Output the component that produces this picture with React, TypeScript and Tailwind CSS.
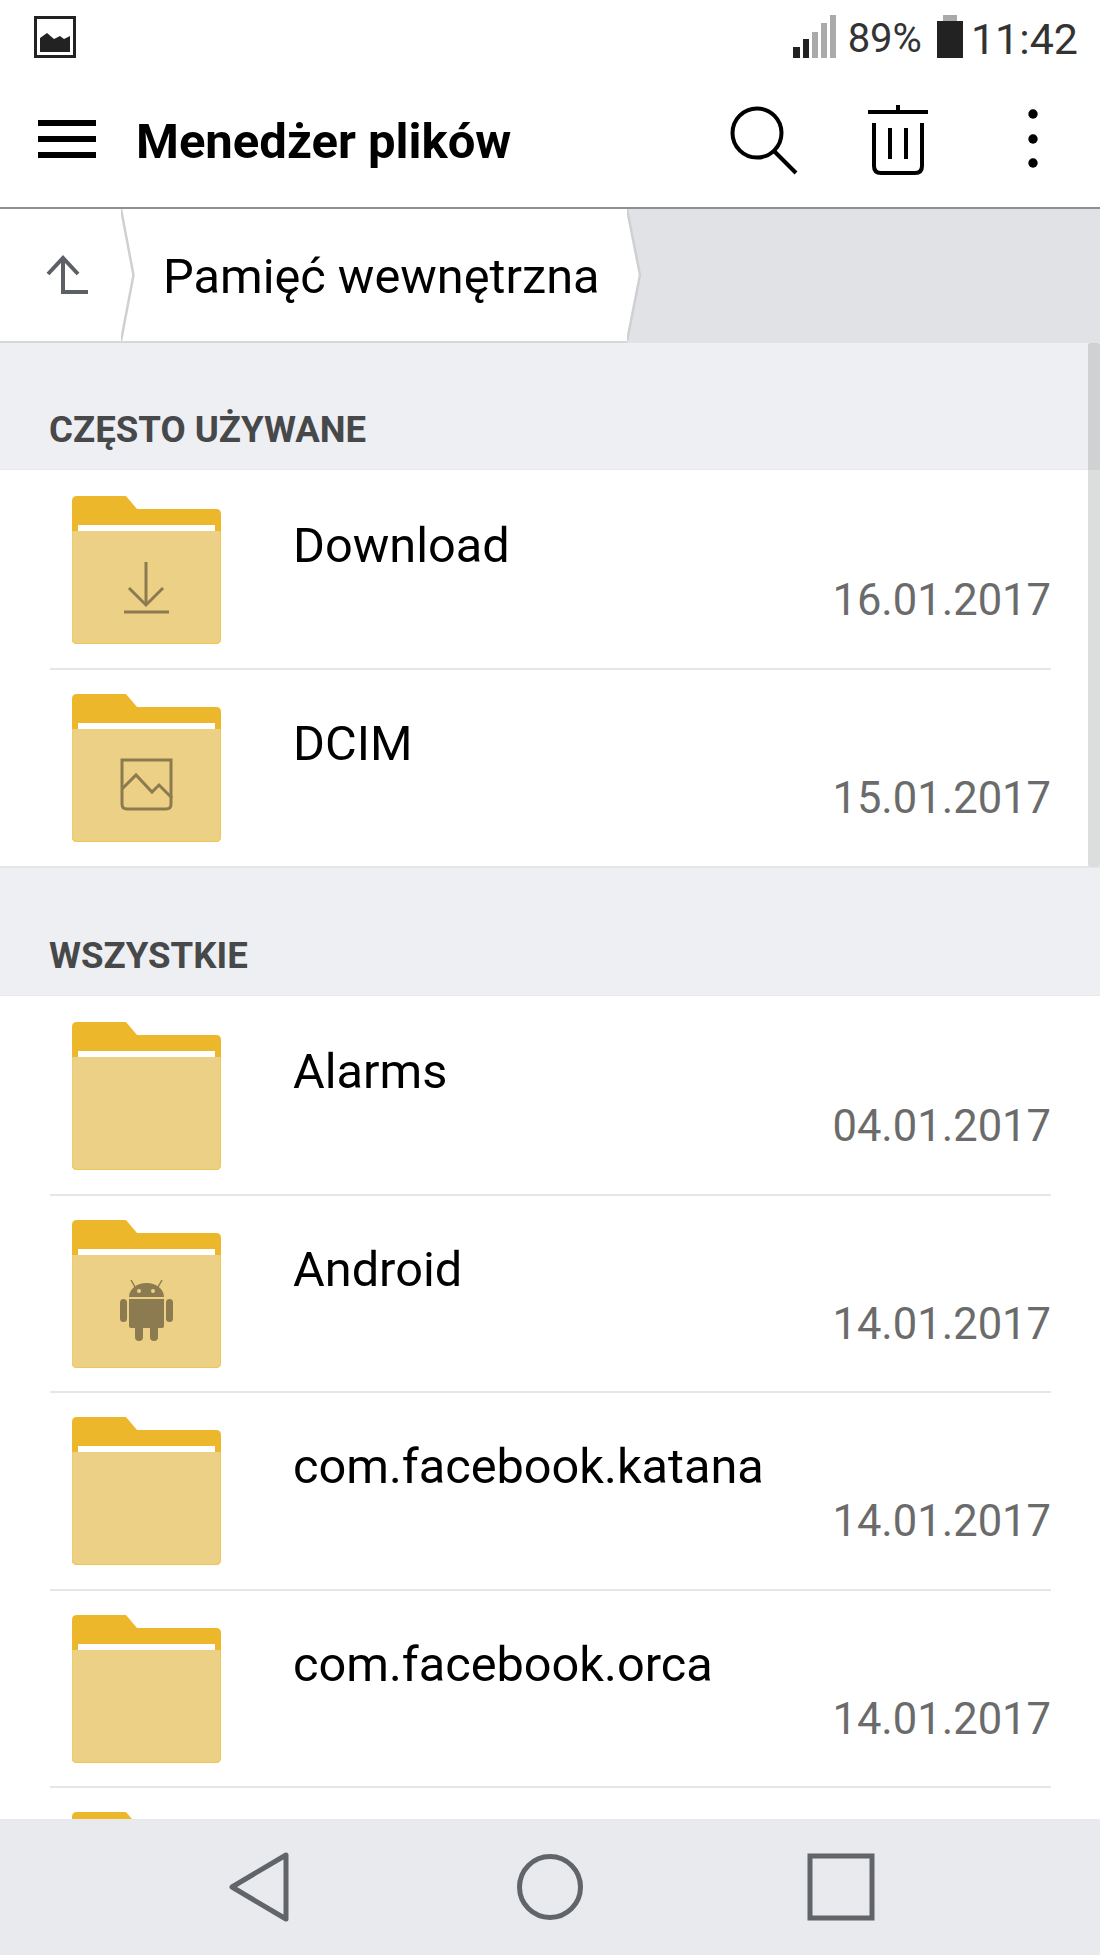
import React from "react";

const ICON = "#8c7b50";

function Folder({ kind }: { kind?: "download" | "image" | "android" }) {
  return (
    <svg width="149" height="148" viewBox="0 0 149 148" className="shrink-0 block">
      <path d="M0 36V5Q0 0 5 0H54L65 13H144Q149 13 149 18V36Z" fill="#ecb72a" />
      <rect x="6" y="29" width="137" height="7" fill="#ffffff" />
      <path d="M0 35H149V143Q149 148 144 148H5Q0 148 0 143Z" fill="#ecd086" />
      <path d="M0 35V143Q0 147.5 5 147.5H144Q148.5 147.5 148.5 143V35" fill="none" stroke="#efc650" strokeWidth="1" />
      {kind === "download" && (
        <g fill="none" stroke={ICON} strokeWidth="3">
          <path d="M74 66V108" />
          <path d="M57 92L74 109L91 92" />
          <path d="M52 116H97" />
        </g>
      )}
      {kind === "image" && (
        <g fill="none" stroke={ICON} strokeWidth="3">
          <path d="M50 66H99V110Q99 115 94 115H55Q50 115 50 110Z" />
          <path d="M50 95L64 81L80 98L87 91L100 104" />
        </g>
      )}
      {kind === "android" && (
        <g fill={ICON}>
          <path d="M57 77C57 69 65 63 74.5 63S92 69 92 77Z" />
          <path d="M57 79H92V106Q92 108 90 108H59Q57 108 57 106Z" />
          <rect x="48" y="79" width="7" height="23" rx="3.5" />
          <rect x="94" y="79" width="7" height="23" rx="3.5" />
          <rect x="63" y="100" width="8" height="21" rx="4" />
          <rect x="78" y="100" width="8" height="21" rx="4" />
          <path d="M63 67L59 60M86 67L90 60" stroke={ICON} strokeWidth="1.5" />
          <circle cx="67" cy="71" r="2" fill="#ecd086" />
          <circle cx="81" cy="71" r="2" fill="#ecd086" />
        </g>
      )}
    </svg>
  );
}

function Row({ name, date, kind, last }: { name: string; date: string; kind?: "download" | "image" | "android"; last?: boolean }) {
  return (
    <div className={`ml-[50px] mr-[49px] flex pt-[24px] pl-[22px] shrink-0 ${last ? "h-[196.5px]" : "h-[197.5px] border-b-2 border-[#e6e6e8]"}`}>
      <Folder kind={kind} />
      <div className="flex-1 ml-[72px] flex flex-col">
        <div className="text-[48.7px] leading-[56px] h-[56px] text-black mt-[22px]">{name}</div>
        <div className="text-[43.5px] leading-[50px] h-[50px] text-[#6b6b6b] text-right mt-[2px]">{date}</div>
      </div>
    </div>
  );
}

function Section({ title, tall }: { title: string; tall?: boolean }) {
  return (
    <div className={`${tall ? "h-[128px]" : "h-[127px]"} shrink-0 bg-[#eeeff2] border-b border-[#e8e9ea] pl-[49px] flex items-end pb-[19px]`}>
      <span className="text-[36.6px] leading-[40px] font-bold text-[#47484a]">{title}</span>
    </div>
  );
}

export default function App() {
  return (
    <div className="w-[1100px] h-[1955px] overflow-hidden flex flex-col bg-white font-[family-name:Roboto,sans-serif]">
      {/* status bar */}
      <div className="h-[70px] shrink-0 flex items-center pl-[34px] pr-[22px]">
        <svg width="42" height="42" viewBox="0 0 42 42" className="mt-[4px]">
          <rect x="1.5" y="1.5" width="39" height="39" fill="none" stroke="#222" strokeWidth="3" />
          <rect x="5.5" y="5.5" width="31" height="31" fill="none" stroke="#fff" strokeWidth="1" />
          <path d="M6 36V22L13 17L20 23L26 20L30 23L36 20V36Z" fill="#222" />
        </svg>
        <div className="flex-1" />
        <svg width="44" height="44" viewBox="0 0 44 44" className="mt-[4px]">
          <rect x="0" y="32" width="7" height="11" fill="#222" />
          <rect x="10" y="24" width="6" height="19" fill="#222" />
          <rect x="19" y="17" width="6" height="26" fill="#aaa" />
          <rect x="28" y="8" width="6" height="35" fill="#aaa" />
          <rect x="37" y="0" width="6" height="43" fill="#aaa" />
        </svg>
        <span className="ml-[11px] text-[40px] leading-[44px] text-[#333] mt-[8px]">89%</span>
        <svg width="26" height="44" viewBox="0 0 26 44" className="ml-[15px] mt-[4px]">
          <rect x="6" y="0" width="14" height="7" fill="#aaa" />
          <rect x="0" y="6" width="26" height="37" fill="#222" />
        </svg>
        <span className="ml-[8px] text-[43px] leading-[44px] text-[#333] mt-[8px]">11:42</span>
      </div>

      {/* toolbar */}
      <div className="h-[139px] shrink-0 flex items-center relative border-b-2 border-[#8f8f8f]">
        <div className="ml-[38px] w-[58px] flex flex-col gap-[10px]">
          <div className="h-[6px] bg-black" />
          <div className="h-[6px] bg-black" />
          <div className="h-[6px] bg-black" />
        </div>
        <span className="ml-[40px] text-[49px] leading-[56px] font-bold text-black mt-[6px]">Menedżer plików</span>
        <div className="flex-1" />
        <svg width="68" height="72" viewBox="0 0 68 72" className="mr-[70px] mt-[2px]">
          <circle cx="27" cy="29" r="24.5" fill="none" stroke="#000" strokeWidth="4" />
          <path d="M44 47L66 69" stroke="#000" strokeWidth="4" fill="none" />
        </svg>
        <svg width="60" height="72" viewBox="0 0 60 72" className="mr-[100px]">
          <path d="M0 9H60M30 2V9" stroke="#000" strokeWidth="4" fill="none" />
          <path d="M6 20V63Q6 70 13 70H47Q54 70 54 63V20" stroke="#000" strokeWidth="4" fill="none" />
          <path d="M22 25V56M38 25V56" stroke="#000" strokeWidth="4" fill="none" />
        </svg>
        <svg width="10" height="60" viewBox="0 0 10 60" className="mr-[62px]">
          <circle cx="5" cy="5" r="4.7" fill="#000" />
          <circle cx="5" cy="30" r="4.7" fill="#000" />
          <circle cx="5" cy="54" r="4.7" fill="#000" />
        </svg>
      </div>

      {/* breadcrumb */}
      <div className="h-[134px] shrink-0 flex bg-[#e1e2e5]">
        <div className="w-[121px] h-full bg-white border-b-2 border-[#d6d7d9] flex items-center justify-center">
          <svg width="44" height="40" viewBox="0 0 44 40" className="ml-[15px]">
            <path d="M2 19L17 3L32 19M17 3V37H42" fill="none" stroke="#5c6066" strokeWidth="4" />
          </svg>
        </div>
        <svg width="14" height="134" viewBox="0 0 14 134" className="shrink-0 block">
          <rect width="14" height="134" fill="#fff" />
          <path d="M0 0L12.5 66L0 132" fill="none" stroke="#cfd0d2" strokeWidth="2.5" />
          <rect y="132" width="14" height="2" fill="#d6d7d9" />
        </svg>
        <div className="w-[492px] h-full bg-white border-b-2 border-[#d6d7d9] pl-[28px] flex items-center">
          <span className="text-[48.7px] leading-[56px] text-black mt-[4px]">Pamięć wewnętrzna</span>
        </div>
        <svg width="16" height="134" viewBox="0 0 16 134" className="shrink-0 block">
          <path d="M0 0L13 66L0 132Z" fill="#fff" />
          <path d="M0 0L13 66L0 132" fill="none" stroke="#cfd0d2" strokeWidth="2.5" />
        </svg>
      </div>

      {/* list */}
      <div className="flex-1 min-h-0 overflow-hidden relative flex flex-col">
        <Section title="CZĘSTO UŻYWANE" />
        <div className="h-[2px] shrink-0" />
        <Row name="Download" date="16.01.2017" kind="download" />
        <Row name="DCIM" date="15.01.2017" kind="image" last />
        <div className="h-[2px] shrink-0 bg-[#e6e6e8]" />
        <Section title="WSZYSTKIE" tall />
        <div className="h-[2px] shrink-0" />
        <Row name="Alarms" date="04.01.2017" />
        <Row name="Android" date="14.01.2017" kind="android" />
        <Row name="com.facebook.katana" date="14.01.2017" />
        <Row name="com.facebook.orca" date="14.01.2017" />
        <Row name="" date="" />
        {/* scrollbar */}
        <div className="absolute top-0 right-0 w-[12px] h-[524px] bg-[#dcdddd] rounded-[3px]">
          <div className="h-[127px] bg-[#d0d1d3] rounded-t-[3px]" />
        </div>
      </div>

      {/* nav bar */}
      <div className="h-[136px] shrink-0 bg-[#e9eaed] flex items-center relative">
        <svg width="62" height="70" viewBox="0 0 62 70" className="ml-[228px] -mt-[1px]">
          <path d="M58 3V67L4 35Z" fill="none" stroke="#616569" strokeWidth="5" strokeLinejoin="round" />
        </svg>
        <svg width="66" height="68" viewBox="0 0 66 68" className="ml-[227px] -mt-[1px]">
          <circle cx="33" cy="34" r="30.5" fill="none" stroke="#616569" strokeWidth="5" />
        </svg>
        <svg width="68" height="68" viewBox="0 0 68 68" className="ml-[224px] -mt-[1px]">
          <rect x="3" y="3" width="62" height="62" fill="none" stroke="#616569" strokeWidth="5" />
        </svg>
      </div>
    </div>
  );
}
